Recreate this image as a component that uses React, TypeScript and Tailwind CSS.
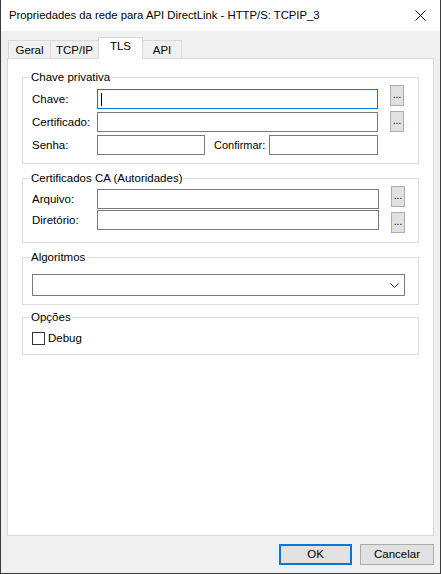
import { type ReactNode } from 'react'

// ─── SMALL WIN32-LIKE CONTROLS ────────────────────────────────────────────────

function Browse({ className = '' }: { className?: string }) {
  return (
    <button
      className={`w-[14px] h-[21px] ml-[12px] bg-[#e1e1e1] border border-[#adadad] text-[10px] leading-none text-[#000] flex items-end justify-center pb-[5px] ${className}`}
    >
      ...
    </button>
  )
}

function TextBox({ w, focused = false }: { w: string; focused?: boolean }) {
  return (
    <div
      className={`${w} h-[20px] bg-white border ${
        focused ? 'border-[#0078d7]' : 'border-[#7a7a7a]'
      } flex items-center pl-[3px]`}
    >
      {focused && <span className="block w-px h-[13px] bg-black" />}
    </div>
  )
}

function Group({ title, className = '', children }: { title: string; className?: string; children: ReactNode }) {
  return (
    <div className={`relative border border-[#dcdcdc] ${className}`}>
      <span className="absolute -top-[9px] left-[7px] bg-white px-[1px] leading-[16px]">{title}</span>
      {children}
    </div>
  )
}

// ─── DIALOG ───────────────────────────────────────────────────────────────────

export default function App() {
  const tabs = [
    { label: 'Geral', w: 'w-[43px]' },
    { label: 'TCP/IP', w: 'w-[49px]' },
    { label: 'TLS', w: 'w-[45px]' },
    { label: 'API', w: 'w-[40px]' },
  ]

  return (
    <div
      className="w-[441px] h-[574px] flex flex-col border-l border-r border-b border-[#3a3a3a] text-[11.5px] text-black bg-[#f0f0f0]"
      style={{ fontFamily: '"Liberation Sans", Arial, sans-serif' }}
    >
      {/* title bar */}
      <div className="h-[31px] bg-white flex items-center justify-between pl-[8px] pr-[10px] shrink-0">
        <span className="text-[11.3px]">Propriedades da rede para API DirectLink - HTTP/S: TCPIP_3</span>
        <svg width="11" height="11" viewBox="0 0 11 11" className="mr-[4px]">
          <path d="M0.5 0.5 L10.5 10.5 M10.5 0.5 L0.5 10.5" stroke="#000" strokeWidth="1" />
        </svg>
      </div>

      <div className="flex-1 flex flex-col px-[6px] pt-[7px]">
        {/* tabs */}
        <div className="flex items-end h-[20px] pl-[1px]">
          {tabs.map((t) =>
            t.label === 'TLS' ? (
              <div
                key={t.label}
                className={`${t.w} -ml-px h-[22px] -mb-px relative z-10 bg-white border border-b-0 border-[#d9d9d9] flex items-center justify-center pb-[3px]`}
              >
                {t.label}
              </div>
            ) : (
              <div
                key={t.label}
                className={`${t.w} -ml-px first:ml-0 h-[18px] bg-[#f0f0f0] border border-b-0 border-[#d9d9d9] flex items-center justify-center pt-[2px]`}
              >
                {t.label}
              </div>
            )
          )}
        </div>

        {/* tab panel */}
        <div className="h-[478px] bg-white border border-[#d9d9d9] flex flex-col px-[14px] pt-[18px]">
          <Group title="Chave privativa" className="pl-[9px] pt-[11px] pb-[8px]">
            <div className="flex items-start h-[20px]">
              <span className="w-[65px] leading-[20px]">Chave:</span>
              <TextBox w="w-[281px]" focused />
              <Browse className="-mt-[4px]" />
            </div>
            <div className="flex items-start h-[20px] mt-[3px]">
              <span className="w-[65px] leading-[20px]">Certificado:</span>
              <TextBox w="w-[281px]" />
              <Browse className="-mt-[1px]" />
            </div>
            <div className="flex items-start h-[20px] mt-[3px]">
              <span className="w-[65px] leading-[20px]">Senha:</span>
              <TextBox w="w-[108px]" />
              <span className="w-[55px] ml-[9px] leading-[20px] text-[11px]">Confirmar:</span>
              <TextBox w="w-[109px]" />
            </div>
          </Group>

          <Group title="Certificados CA (Autoridades)" className="mt-[14px] pl-[9px] pt-[10px] pb-[12px]">
            <div className="flex items-start h-[20px]">
              <span className="w-[65px] leading-[20px]">Arquivo:</span>
              <TextBox w="w-[282px]" />
              <Browse className="-mt-[3px]" />
            </div>
            <div className="flex items-start h-[20px] mt-[1px]">
              <span className="w-[65px] leading-[20px]">Diretório:</span>
              <TextBox w="w-[282px]" />
              <Browse className="mt-[2px]" />
            </div>
          </Group>

          <Group title="Algoritmos" className="mt-[14px] pl-[9px] pr-[13px] pt-[16px] pb-[8px]">
            <div className="h-[22px] border border-[#7a7a7a] bg-white flex items-center justify-end pr-[5px]">
              <svg width="9" height="5" viewBox="0 0 9 5">
                <path d="M0.5 0.5 L4.5 4.5 L8.5 0.5" fill="none" stroke="#333" strokeWidth="1" />
              </svg>
            </div>
          </Group>

          <Group title="Opções" className="mt-[12px] pl-[9px] pt-[12px] pb-[7px]">
            <label className="flex items-center gap-[3px]">
              <span className="w-[13px] h-[13px] border border-[#333] bg-white" />
              <span>Debug</span>
            </label>
          </Group>
        </div>

        {/* dialog buttons */}
        <div className="flex justify-end gap-[8px] mt-[8px]">
          <button className="w-[73px] h-[21px] bg-[#e1e1e1] border-2 border-[#0078d7] leading-none">OK</button>
          <button className="w-[74px] h-[21px] bg-[#e1e1e1] border border-[#adadad] leading-none">Cancelar</button>
        </div>
      </div>
    </div>
  )
}
